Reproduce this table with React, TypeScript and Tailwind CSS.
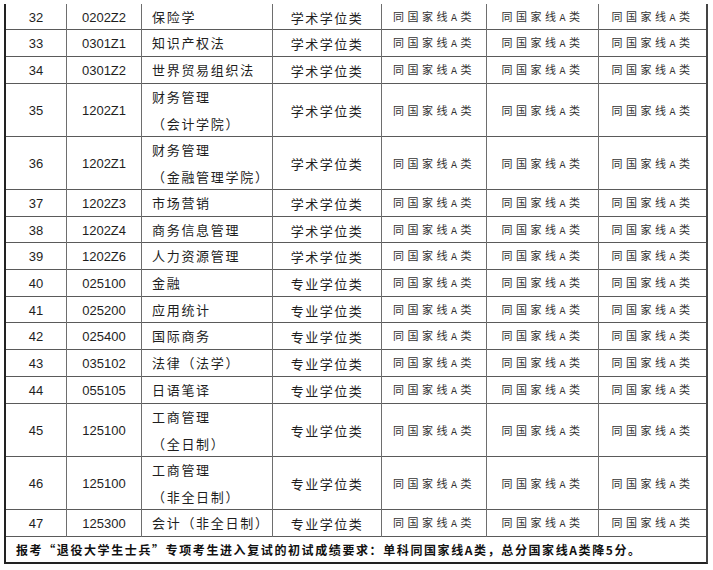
const rows: { no: string; code: string; name: string[]; kind: string; h: string }[] = [
  { no: "32", code: "0202Z2", name: ["保险学"], kind: "学术学位类", h: "h-[26px]" },
  { no: "33", code: "0301Z1", name: ["知识产权法"], kind: "学术学位类", h: "h-[27px]" },
  { no: "34", code: "0301Z2", name: ["世界贸易组织法"], kind: "学术学位类", h: "h-[27px]" },
  { no: "35", code: "1202Z1", name: ["财务管理", "（会计学院）"], kind: "学术学位类", h: "h-[53px]" },
  { no: "36", code: "1202Z1", name: ["财务管理", "（金融管理学院）"], kind: "学术学位类", h: "h-[53px]" },
  { no: "37", code: "1202Z3", name: ["市场营销"], kind: "学术学位类", h: "h-[27px]" },
  { no: "38", code: "1202Z4", name: ["商务信息管理"], kind: "学术学位类", h: "h-[26px]" },
  { no: "39", code: "1202Z6", name: ["人力资源管理"], kind: "学术学位类", h: "h-[27px]" },
  { no: "40", code: "025100", name: ["金融"], kind: "专业学位类", h: "h-[27px]" },
  { no: "41", code: "025200", name: ["应用统计"], kind: "专业学位类", h: "h-[26px]" },
  { no: "42", code: "025400", name: ["国际商务"], kind: "专业学位类", h: "h-[27px]" },
  { no: "43", code: "035102", name: ["法律（法学）"], kind: "专业学位类", h: "h-[27px]" },
  { no: "44", code: "055105", name: ["日语笔译"], kind: "专业学位类", h: "h-[27px]" },
  { no: "45", code: "125100", name: ["工商管理", "（全日制）"], kind: "专业学位类", h: "h-[53px]" },
  { no: "46", code: "125100", name: ["工商管理", "（非全日制）"], kind: "专业学位类", h: "h-[53px]" },
  { no: "47", code: "125300", name: ["会计（非全日制）"], kind: "专业学位类", h: "h-[27px]" },
];

const cjk = "font-['Noto_Sans_CJK_SC',sans-serif]";
const latin = "font-['Liberation_Sans',sans-serif]";
const cell = "flex items-center border-r border-[#6e6e6e]";

function Line() {
  return (
    <span className={`${cjk} text-[11px] tracking-[3.5px] text-[#333]`}>
      同国家线<span className="font-['Liberation_Mono',monospace] text-[10px]">A</span>类
    </span>
  );
}

export default function App() {
  return (
    <div className="h-[570px] w-[713px] bg-white pt-[4px] pl-[4px]">
      <div className="w-[704px] border-l-2 border-r-2 border-b-2 border-l-[#222] border-r-[#444] border-b-[#222] text-[#1e1e1e]">
        {rows.map((r) => (
          <div
            key={r.no}
            className={`grid grid-cols-[61px_75px_131px_109px_105px_112px_107px] border-b border-[#5a5a5a] ${r.h}`}
          >
            <div className={`${cell} justify-center ${latin} text-[13px]`}>{r.no}</div>
            <div className={`${cell} justify-center ${latin} text-[13px]`}>{r.code}</div>
            <div className={`${cell} pl-[10px] ${cjk} text-[13px] tracking-[1.7px]`}>
              <div className="leading-[26.5px]">
                {r.name.map((n) => (
                  <div key={n}>{n}</div>
                ))}
              </div>
            </div>
            <div className={`${cell} justify-center ${cjk} text-[13px] tracking-[1.5px]`}>{r.kind}</div>
            <div className={`${cell} justify-center`}>
              <Line />
            </div>
            <div className={`${cell} justify-center`}>
              <Line />
            </div>
            <div className="flex items-center justify-center">
              <Line />
            </div>
          </div>
        ))}
        <div
          className={`flex h-[25px] items-center pl-[10px] ${cjk} text-[12px] font-bold tracking-[1.6px] text-[#111]`}
        >
          报考“退役大学生士兵”专项考生进入复试的初试成绩要求：单科同国家线A类，总分国家线A类降5分。
        </div>
      </div>
    </div>
  );
}
